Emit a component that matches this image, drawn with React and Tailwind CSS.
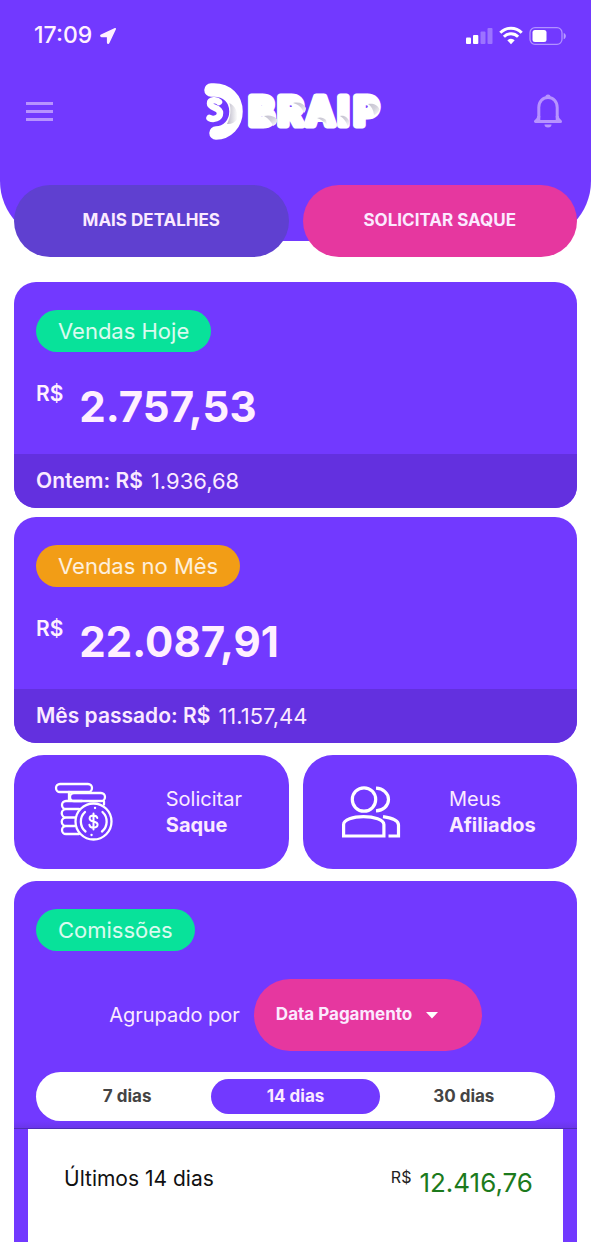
import React, { useState } from "react";

function LocationArrow() {
  return (
    <svg width="16" height="16" viewBox="0 0 16 16" fill="currentColor" aria-hidden="true">
      <path d="M15.2.8 8.700 14.700c-.3.6-1 .5-1-.2V8.400H1.500c-.7 0-.8-.8-.2-1.100L15.200.8Z" stroke="currentColor" strokeWidth="1.600" strokeLinejoin="round" />
    </svg>
  );
}

function StatusIcons() {
  return (
    <svg width="102" height="20" viewBox="0 0 102 20" fill="#fff" aria-hidden="true">
      <rect x="1" y="11.500" width="5" height="6.500" rx="1" />
      <rect x="8" y="9" width="5.300" height="9" rx="1" />
      <rect x="15.500" y="5.500" width="5" height="12.500" rx="1" opacity=".3" />
      <rect x="22.500" y="2" width="5" height="16" rx="1" opacity=".3" />
      <g fill="none" stroke="#fff" strokeWidth="3">
        <path d="M35.300 6.800a15 15 0 0 1 21.400 0" />
        <path d="M38.900 10.700a10 10 0 0 1 14.200 0" />
      </g>
      <path d="M46 18.200 42.300 14.300a5.300 5.300 0 0 1 7.400 0Z" />
      <rect x="65" y="1.700" width="32" height="16.600" rx="5" fill="none" stroke="#fff" strokeOpacity=".45" strokeWidth="1.300" />
      <path d="M98.700 7v6.200c2.800-.8 2.800-5.400 0-6.200Z" opacity=".5" />
      <rect x="67.500" y="4" width="14" height="12" rx="2.500" />
    </svg>
  );
}

function BellIcon() {
  return (
    <svg width="28" height="36" viewBox="1 0 28 36" fill="none" stroke="currentColor" strokeWidth="3" aria-hidden="true">
      <path d="M5.800 27V14.500C5.800 8.300 9.800 4.500 15 4.500s9.200 3.800 9.200 10V27" />
      <path d="M5.800 23c0 2.500-1.600 4.300-3.300 5.500h25c-1.700-1.200-3.300-3-3.300-5.500" strokeLinejoin="round" />
      <path d="M12.300 4.500a2.700 2.900 0 0 1 5.400 0Z" fill="currentColor" stroke="none" />
      <path d="M11.500 31.500h7a3.500 3 0 0 1-7 0Z" fill="currentColor" stroke="none" />
    </svg>
  );
}

const logoLetters = [
  ["B", 47],
  ["R", 76],
  ["A", 104],
  ["I", 136],
  ["P", 152],
];

function BraipLogo() {
  return (
    <svg width="180" height="60" viewBox="2 -2 180 60" role="img" aria-label="Braip">
      <defs>
        <linearGradient id="fold" x1="0" y1="0" x2="1" y2="1">
          <stop offset="0" stopColor="#c4c1d0" />
          <stop offset=".5" stopColor="#d4d2dc" />
          <stop offset="1" stopColor="#fff" />
        </linearGradient>
        <linearGradient id="arc" x1="0" y1="0" x2="1" y2="0">
          <stop offset="0" stopColor="#b9b6c6" />
          <stop offset="1" stopColor="#fff" />
        </linearGradient>
      </defs>
      <path d="M9 7h3c13 0 22 9 22 21.500S25 50 14 50" fill="none" stroke="#fff" strokeWidth="13.500" strokeLinecap="round" />
      <path d="M27.300 20c2 6 1.500 14-2.300 21 4 .5 8-1.500 10.500-5 .5-7-2-13-8.200-16Z" fill="url(#arc)" />
      <path d="M17 19c-2.500-2.600-9-2.300-9 1.500 0 5 10 3.500 10 9.500 0 5.500-6.500 7-10.500 5" fill="none" stroke="#fff" strokeWidth="6.500" strokeLinecap="round" />
      <g fontFamily="Inter, sans-serif" fontWeight="700" fontSize="38" strokeLinejoin="round">
        {logoLetters.map(([letter, x]) => (
          <text key={letter} x={x} y="42" fill="#fff" stroke="#fff" strokeWidth="7">
            {letter}
          </text>
        ))}
      </g>
      <g fill="url(#fold)">
        <path d="M62 33c5-1.500 10 0 13 3 .5 4-1.500 6-4 7-1.500-4-4.500-7.500-9-10Z" />
        <path d="M91 20c6-1.500 11 .5 13 5 0 2-1 4-2 5-2-5-5-8.500-11-10Z" />
        <path d="M115 35c4-1.500 7 0 9 2l1 5c-2.500-3-6-5.500-10-7Z" />
        <path d="M138 33c5-1 8 2 9.500 6 0 2-1 3-2 4-1-4-3.500-7.500-7.500-10Z" />
        <path d="M166 21c5-1 10 1 11.500 5.500-1 3-3 4.500-5.500 5.500-.5-5-2.500-8.500-6-11Z" />
      </g>
    </svg>
  );
}

function CoinsIcon() {
  return (
    <svg width="60" height="60" viewBox="0 0 60 60" fill="none" stroke="#fff" strokeWidth="2.300" strokeLinecap="round" strokeLinejoin="round" aria-hidden="true">
      <rect x="2" y="2" width="36" height="8" rx="4" />
      <rect x="16" y="11" width="35" height="8" rx="4" />
      <path d="M15 10v8M28 19H12a4 4 0 0 0 0 8h13M12 27a4 4 0 0 0 0 8.500h9M12 35.500a4 4 0 0 0 0 8.500h9M12 44a4 4 0 0 0 0 8h13M50 19.500v3" />
      <circle cx="39.500" cy="39.500" r="18" />
      <path d="M31 30a13 13 0 0 0 .5 19.500M48.500 30a13 13 0 0 1-.5 19.500M41 26h.1M37.500 53h.1" />
      <path d="M43.300 36c-.5-1.700-2-2.500-3.800-2.500-2.200 0-3.900 1-3.900 2.900 0 4.200 8 2.100 8 6.200 0 2-1.900 3-4.100 3s-3.900-1-4.100-2.800M39.500 31.500v16" strokeWidth="2" />
    </svg>
  );
}

function PeopleIcon() {
  return (
    <svg width="60" height="54" viewBox="2 0 60 54" fill="none" stroke="#fff" strokeWidth="3.200" aria-hidden="true">
      <circle cx="24" cy="14.500" r="11.700" />
      <path d="M36 3.200c7 .3 12.500 5 12.500 11.300S43 25.600 36 25.900" />
      <path d="M3.600 51V39.500C3.600 34.500 13 31.600 23.500 31.600s20.400 2.900 20.400 7.900V51Z" />
      <path d="M43 31.700c8.500 1.300 15.500 4 15.500 8.300v11H48.500" />
    </svg>
  );
}

const pillColors = { green: "bg-[#08e29a]", orange: "bg-[#f29d16]" };

function Pill({ color, children }) {
  return (
    <h2 className={`${pillColors[color]} inline-flex h-[42px] items-center rounded-full px-[22px] text-[22px] text-white/85`}>
      {children}
    </h2>
  );
}

function SalesCard({ title, color, amount, label, previous }) {
  return (
    <section className="overflow-hidden rounded-[22px] bg-[#7239ff]">
      <div className="h-[172px] px-[22px] pt-7">
        <Pill color={color}>{title}</Pill>
        <p className="mt-[30px] flex items-start gap-4 text-[#fff0ff]">
          <span className="text-[21px] leading-6 font-semibold">R$</span>
          <span className="text-[42px] leading-[50px] font-bold">{amount}</span>
        </p>
      </div>
      <p className="flex h-[54px] items-center gap-2 bg-[#6330df] px-[22px] text-[22px] text-[#fbeaff]">
        <strong className="text-[21px] font-semibold">{label}: R$</strong>
        <span>{previous}</span>
      </p>
    </section>
  );
}

function ActionCard({ icon, top, bottom }) {
  return (
    <button type="button" className="grid h-[114px] grid-cols-2 items-center rounded-[30px] bg-[#7239ff] text-left text-xl leading-[26px] text-[#fbeaff]">
      <span className="flex justify-center pl-0.5">{icon}</span>
      <span className="flex justify-center pr-8">
        <span>
          <span className="block">{top}</span>
          <strong className="block font-bold">{bottom}</strong>
        </span>
      </span>
    </button>
  );
}

const periods = ["7 dias", "14 dias", "30 dias"];

export default function App() {
  const [period, setPeriod] = useState("14 dias");
  return (
    <div className="flex min-h-screen flex-col bg-white font-['Inter',sans-serif]">
      <header className="h-[241px] rounded-b-[60px] bg-[#7239ff] text-white">
        <div className="flex h-[71px] items-center justify-between pr-6 pl-[34px]">
          <div className="flex items-center gap-2 text-[23px] font-medium text-[#fff0ff]">
            <span>17:09</span>
            <LocationArrow />
          </div>
          <StatusIcons />
        </div>
        <nav className="flex h-20 items-center justify-between pr-[29px] pl-[26px]">
          <button type="button" aria-label="Menu" className="flex flex-col gap-[5px] text-[#b793ff]">
            <span className="h-[3px] w-[27px] bg-current" />
            <span className="h-[3px] w-[27px] bg-current" />
            <span className="h-[3px] w-[27px] bg-current" />
          </button>
          <BraipLogo />
          <button type="button" aria-label="Notificações" className="text-[#b793ff]">
            <BellIcon />
          </button>
        </nav>
      </header>

      <main className="-mt-14 flex flex-1 flex-col px-3.5">
        <div className="grid grid-cols-2 gap-3.5 text-[17px] font-bold text-[#fbeaff]">
          <button type="button" className="h-[72px] rounded-full bg-[#5f40d0]">MAIS DETALHES</button>
          <button type="button" className="h-[72px] rounded-full bg-[#e6379f]">SOLICITAR SAQUE</button>
        </div>

        <div className="mt-[25px] flex flex-col gap-[9px]">
          <SalesCard title="Vendas Hoje" color="green" amount="2.757,53" label="Ontem" previous="1.936,68" />
          <SalesCard title="Vendas no Mês" color="orange" amount="22.087,91" label="Mês passado" previous="11.157,44" />
        </div>

        <div className="mt-3 grid grid-cols-2 gap-3.5">
          <ActionCard icon={<CoinsIcon />} top="Solicitar" bottom="Saque" />
          <ActionCard icon={<PeopleIcon />} top="Meus" bottom="Afiliados" />
        </div>

        <section className="mt-3 flex flex-1 flex-col rounded-t-[22px] bg-[#7239ff]">
          <div className="px-[22px] pt-7">
            <Pill color="green">Comissões</Pill>
            <div className="mt-7 flex items-center justify-center gap-3.5">
              <label htmlFor="grouping" className="text-xl text-[#fbeaff]">Agrupado por</label>
              <div className="relative">
                <select id="grouping" className="h-[72px] w-[228px] appearance-none rounded-full bg-[#e6379f] pr-10 pl-[22px] text-[17px] font-bold text-[#fbeaff]">
                  <option>Data Pagamento</option>
                  <option>Data Venda</option>
                </select>
                <svg className="pointer-events-none absolute top-[33px] right-11" width="12" height="7" viewBox="0 0 12 7" fill="#fff" aria-hidden="true">
                  <path d="M0 0h12L6 6.500Z" />
                </svg>
              </div>
            </div>
            <div className="mt-[21px] grid grid-cols-3 rounded-full bg-white p-[7px]">
              {periods.map((p) => (
                <button
                  key={p}
                  type="button"
                  aria-pressed={p === period}
                  onClick={() => setPeriod(p)}
                  className={`h-[35px] rounded-full text-[17px] font-bold ${p === period ? "bg-[#7239ff] text-[#fbeaff]" : "text-[#444]"}`}
                >
                  {p}
                </button>
              ))}
            </div>
          </div>
          <div className="h-[7px] bg-linear-to-b from-[#7239ff] to-[#6a36ea]" />
          <div className="flex flex-1 flex-col border-t border-[#4f2cb8] px-3.5">
            <div className="flex flex-1 items-start justify-between bg-white pt-9 pr-[30px] pb-8 pl-9">
              <span className="text-[21px] leading-7 text-[#111]">Últimos 14 dias</span>
              <span className="flex items-start gap-2">
                <span className="text-base leading-6 text-[#222]">R$</span>
                <span className="text-[26px] leading-9 text-[#1c7a1c]">12.416,76</span>
              </span>
            </div>
          </div>
        </section>
      </main>
    </div>
  );
}
